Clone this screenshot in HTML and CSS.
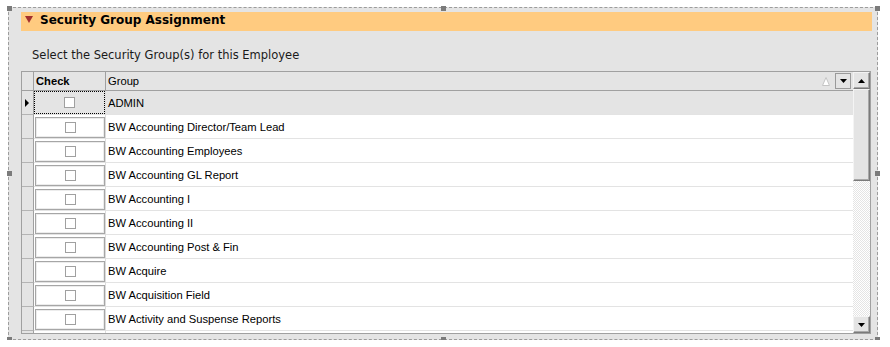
FILE: index.html
```html
<!DOCTYPE html>
<html lang="en">
<head>
  <meta charset="UTF-8" />
  <meta name="viewport" content="width=device-width, initial-scale=1.0"/>
  <title>Security Group Assignment</title>
  <link rel="stylesheet" href="styles.css">
</head>
<body>
  <div class="designer">
    <span class="handle h-tl"></span>
    <span class="handle h-tm"></span>
    <span class="handle h-tr"></span>
    <span class="handle h-ml"></span>
    <span class="handle h-mr"></span>
    <span class="handle h-bl"></span>
    <span class="handle h-bm"></span>
    <span class="handle h-br"></span>

    <div class="section-bar">
      <svg class="collapse" viewBox="0 0 7 6"><path d="M0 0H7L3.5 6Z"/></svg>
      <span class="section-title">Security Group Assignment</span>
    </div>

    <div class="hint">Select the Security Group(s) for this Employee</div>

    <div class="grid">
      <div class="grid-main">
        <div class="grid-head">
          <div class="rh"></div>
          <div class="ck"><b>Check</b></div>
          <div class="gp">
            <span>Group</span>
            <svg class="sort" viewBox="0 0 8 9"><path d="M4 0.5L7.5 8.5H0.5Z"/></svg>
            <span class="filter-btn"><svg viewBox="0 0 7 4"><path d="M0 0H7L3.5 4Z"/></svg></span>
          </div>
        </div>

        <div class="row current">
          <div class="rh"><svg class="pointer" viewBox="0 0 4 8"><path d="M0 0L4 4L0 8Z"/></svg></div>
          <div class="ck"><div class="focus"><span class="box"></span></div></div>
          <div class="gp">ADMIN</div>
        </div>
        <div class="row">
          <div class="rh"></div>
          <div class="ck"><div class="btn"><span class="box"></span></div></div>
          <div class="gp">BW Accounting Director/Team Lead</div>
        </div>
        <div class="row">
          <div class="rh"></div>
          <div class="ck"><div class="btn"><span class="box"></span></div></div>
          <div class="gp">BW Accounting Employees</div>
        </div>
        <div class="row">
          <div class="rh"></div>
          <div class="ck"><div class="btn"><span class="box"></span></div></div>
          <div class="gp">BW Accounting GL Report</div>
        </div>
        <div class="row">
          <div class="rh"></div>
          <div class="ck"><div class="btn"><span class="box"></span></div></div>
          <div class="gp">BW Accounting I</div>
        </div>
        <div class="row">
          <div class="rh"></div>
          <div class="ck"><div class="btn"><span class="box"></span></div></div>
          <div class="gp">BW Accounting II</div>
        </div>
        <div class="row">
          <div class="rh"></div>
          <div class="ck"><div class="btn"><span class="box"></span></div></div>
          <div class="gp">BW Accounting Post &amp; Fin</div>
        </div>
        <div class="row">
          <div class="rh"></div>
          <div class="ck"><div class="btn"><span class="box"></span></div></div>
          <div class="gp">BW Acquire</div>
        </div>
        <div class="row">
          <div class="rh"></div>
          <div class="ck"><div class="btn"><span class="box"></span></div></div>
          <div class="gp">BW Acquisition Field</div>
        </div>
        <div class="row">
          <div class="rh"></div>
          <div class="ck"><div class="btn"><span class="box"></span></div></div>
          <div class="gp">BW Activity and Suspense Reports</div>
        </div>
        <div class="row">
          <div class="rh"></div>
          <div class="ck"><div class="btn"><span class="box"></span></div></div>
          <div class="gp"></div>
        </div>
      </div>

      <div class="vscroll">
        <div class="sb-btn"><svg viewBox="0 0 7 4"><path d="M3.5 0L7 4H0Z"/></svg></div>
        <div class="sb-thumb"></div>
        <div class="sb-track"></div>
        <div class="sb-btn"><svg viewBox="0 0 7 4"><path d="M0 0H7L3.5 4Z"/></svg></div>
      </div>
    </div>
  </div>
</body>
</html>
```

FILE: styles.css
```css
body {
  margin: 0;
  padding: 7px 0 0 8px;
  background: #fff;
}
.designer {
  position: relative;
  box-sizing: border-box;
  width: 870px;
  height: 333px;
  border: 1px dashed #9c9c9c;
  background: #e4e4e4;
  padding: 4px 5px 0 12px;
}
.handle {
  position: absolute;
  width: 5px;
  height: 5px;
  background: #7b7b7b;
}
.h-tl { left: -2px; top: -2px; }
.h-tm { left: calc(50% - 2px); top: -2px; }
.h-tr { right: -3px; top: -2px; }
.h-ml { left: -2px; top: calc(50% - 3px); }
.h-mr { right: -3px; top: calc(50% - 3px); }
.h-bl { left: -2px; bottom: -3px; }
.h-bm { left: calc(50% - 2px); bottom: -3px; }
.h-br { right: -3px; bottom: -3px; }

.section-bar {
  display: flex;
  align-items: flex-start;
  height: 19px;
  background: #ffcb80;
  padding-left: 4px;
  gap: 7px;
}
.collapse {
  width: 8px;
  height: 7px;
  margin-top: 4px;
  fill: #a3302e;
}
.section-title {
  font: bold 12px "DejaVu Sans", Verdana, sans-serif;
  line-height: 14px;
  padding-top: 1px;
  color: #000;
}
.hint {
  box-sizing: border-box;
  height: 40px;
  display: flex;
  align-items: center;
  padding: 7px 0 0 11px;
  font: 11.5px "DejaVu Sans", Verdana, sans-serif;
  color: #1a1a1a;
}

.grid {
  display: flex;
  box-sizing: border-box;
  height: 263px;
  margin-right: 1px;
  border: 1px solid #a0a0a0;
  background: #fff;
  font: 11.2px "Liberation Sans", Arial, sans-serif;
  color: #000;
}
.grid-main {
  flex: 1;
  min-width: 0;
  overflow: hidden;
}
.grid-head,
.row {
  display: flex;
}
.grid-head {
  box-sizing: border-box;
  height: 19px;
  border-bottom: 1px solid #a0a0a0;
  background: #e4e4e4;
}
.grid-head .rh,
.grid-head .ck {
  border-right: 1px solid #a0a0a0;
}
.grid-head .ck {
  padding-left: 2px;
}
.grid-head .ck,
.grid-head .gp {
  display: flex;
  align-items: center;
}
.rh {
  box-sizing: border-box;
  width: 12px;
  flex-shrink: 0;
  background: #e4e4e4;
  border-right: 1px solid #a0a0a0;
}
.ck {
  box-sizing: border-box;
  width: 72px;
  flex-shrink: 0;
  border-right: 1px solid #dcdcdc;
}
.gp {
  flex: 1;
  min-width: 0;
  padding-left: 2px;
}
.sort {
  width: 8px;
  height: 9px;
  margin-left: auto;
  fill: #fff;
  stroke: #c4c4c4;
  stroke-width: 1;
}
.filter-btn {
  box-sizing: border-box;
  width: 16px;
  height: 16px;
  margin: 0 2px 0 5px;
  border: 1px solid #9a9a9a;
  display: flex;
  align-items: center;
  justify-content: center;
}
.filter-btn svg,
.sb-btn svg {
  width: 7px;
  height: 4px;
  fill: #000;
}

.row {
  height: 24px;
}
.row .rh {
  border-bottom: 1px solid #b4b4b4;
  display: flex;
  align-items: center;
  padding-left: 3px;
}
.row .ck,
.row .gp {
  border-bottom: 1px solid #e3e3e3;
}
.row .gp {
  display: flex;
  align-items: center;
}
.row.current .ck,
.row.current .gp {
  background: #e4e4e4;
}
.pointer {
  width: 4px;
  height: 8px;
  fill: #000;
}
.btn,
.focus {
  box-sizing: border-box;
  display: flex;
  align-items: center;
  justify-content: center;
}
.btn {
  height: 21px;
  margin: 2px 0 0 1px;
  border: 1px solid #a6a6a6;
  box-shadow: inset 0 0 0 1px #ececec;
  background: #fff;
}
.focus {
  height: 23px;
  border: 1px dotted #000;
}
.box {
  box-sizing: border-box;
  width: 11px;
  height: 11px;
  border: 1px solid #a0a0a0;
  background: #fff;
}

.vscroll {
  width: 17px;
  display: flex;
  flex-direction: column;
}
.sb-btn,
.sb-thumb {
  box-sizing: border-box;
  background: #e4e4e4;
  border-top: 1px solid #f4f4f4;
  border-left: 1px solid #f4f4f4;
  border-right: 1px solid #7a7a7a;
  border-bottom: 1px solid #7a7a7a;
  box-shadow: inset -1px -1px 0 #a8a8a8;
}
.sb-btn {
  height: 17px;
  display: flex;
  align-items: center;
  justify-content: center;
}
.sb-thumb {
  height: 92px;
}
.sb-track {
  flex: 1;
  background: repeating-conic-gradient(#fff 0 25%, #e4e4e4 0 50%) 0 0 / 2px 2px;
}
```
